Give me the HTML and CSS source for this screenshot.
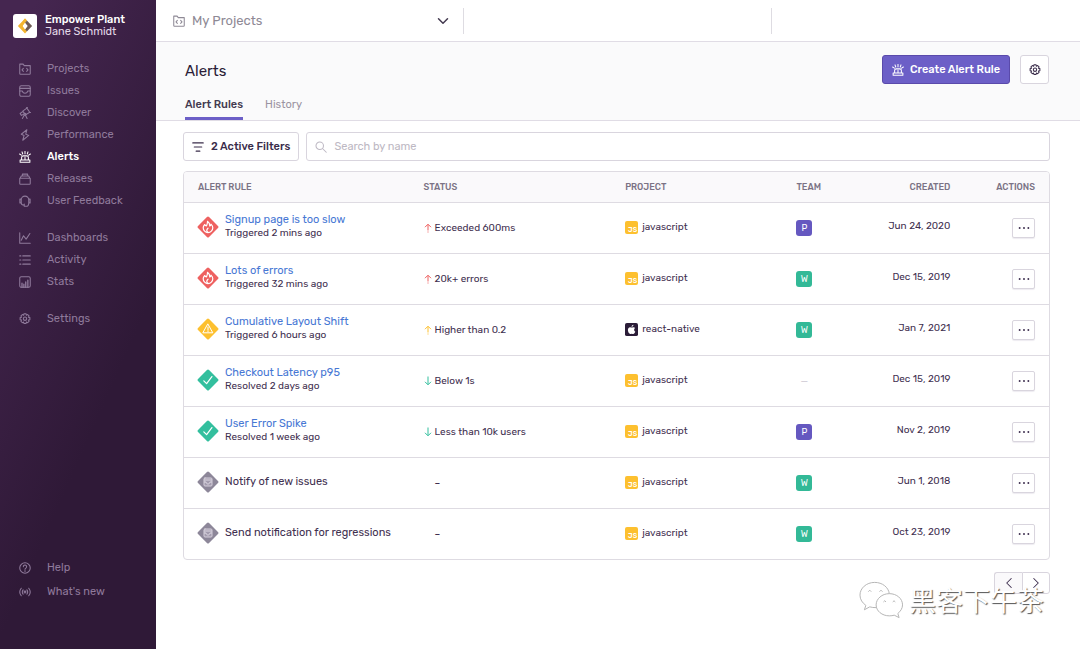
FILE: index.html
```html
<!DOCTYPE html>
<html lang="en">
<head>
<meta charset="utf-8">
<title>Alerts</title>
<link rel="stylesheet" href="styles.css">
</head>
<body>
<svg class="sprite" aria-hidden="true">
  <symbol id="folder" viewBox="0 0 16 16"><path d="M1 1.500h4.500L7 3.500h8v10.500a1 1 0 0 1-1 1H2a1 1 0 0 1-1-1zM5.800 7.200 4 9.200l1.800 2M10.200 7.200l1.800 2-1.800 2"/></symbol>
  <symbol id="issues" viewBox="0 0 16 16"><rect x="1" y="1" width="14" height="14" rx="2"/><path d="M1 4.500h14M1 8h3.500c.3 2 1.500 3 3.500 3s3.200-1 3.500-3H15"/></symbol>
  <symbol id="discover" viewBox="0 0 16 16"><path d="M5 5.500 10.500 1.500l3.800 5.500-5.500 3.500zM5.300 6 1.500 8.500l1.700 2.700L7.500 9M10 1l1.300-.5M14.300 7l1 .3"/><circle cx="8" cy="9.800" r="1.500"/><path d="M7 11l-2.500 4.300M8.800 11.200l2 4.100"/></symbol>
  <symbol id="bolt" viewBox="0 0 16 16"><path d="M10.500 1 3 7l3.800 1.600L5 15l8-6.500-4-1.600z"/></symbol>
  <symbol id="siren" viewBox="0 0 16 16"><path d="M3.500 12V8.500a2 2 0 0 1 2-2h5a2 2 0 0 1 2 2V12M1.500 15v-3h13v3zM8 8.500V12M8 .5v3.300M4 1.200l1 2.800M12 1.200 11 4M.8 4l2.400 1.500M15.200 4l-2.400 1.500"/></symbol>
  <symbol id="releases" viewBox="0 0 16 16"><path d="M1 7h14v7a1 1 0 0 1-1 1H2a1 1 0 0 1-1-1zM1.500 7l1.500-3h10l1.500 3M4.500 4V1.500h7V4"/></symbol>
  <symbol id="feedback" viewBox="0 0 16 16"><path d="M3 6.500a5 5 0 0 1 10 0M3 5.500H1.200v5H3zM13 5.500h1.800v5H13zM3 10.500c0 2 2 3 4 3M7 12v3h2.500c2.500 0 3.500-2 3.500-4.500"/></symbol>
  <symbol id="chart" viewBox="0 0 16 16"><path d="M1 1v14h14M3 11l3-6 3.500 4.500L14.500 2"/></symbol>
  <symbol id="list" viewBox="0 0 16 16"><path d="M5 2.500h10M5 8h10M5 13.500h10M1 2.500h1.500M1 8h1.500M1 13.500h1.500"/></symbol>
  <symbol id="stats" viewBox="0 0 16 16"><rect x="1" y="1" width="14" height="14" rx="2"/><path d="M4 15V9.500M6.500 15V11M9 15V8M11.800 15V5.500" stroke-width="1.800"/></symbol>
  <symbol id="gear" viewBox="0 0 16 16"><path d="M6.700 1h2.600l.5 1.900 1.700-.9 1.900 1.900-.9 1.700 2 .5v2.800l-2 .5.9 1.700-1.900 1.900-1.700-.9-.5 2H6.700l-.5-2-1.700.9-1.900-1.900.9-1.700-2-.5V6.100l2-.5-.9-1.700L4.500 2l1.700.9z"/><circle cx="8" cy="7.600" r="2.200"/></symbol>
  <symbol id="help" viewBox="0 0 16 16"><circle cx="8" cy="8" r="7"/><path d="M5.800 6.300a2.200 2.200 0 1 1 3.400 1.800c-.8.500-1.200.8-1.200 1.700M8 11.300v1.200"/></symbol>
  <symbol id="broadcast" viewBox="0 0 16 16"><circle cx="8" cy="8" r="1.200"/><path d="M5.500 5.200a4.500 4.500 0 0 0 0 5.600M10.500 5.200a4.500 4.500 0 0 1 0 5.600M3 3a8 8 0 0 0 0 10M13 3a8 8 0 0 1 0 10"/></symbol>
  <symbol id="search" viewBox="0 0 16 16"><circle cx="6.300" cy="6.300" r="5"/><path d="M10 10l5 5"/></symbol>
  <symbol id="filter" viewBox="0 0 16 16"><path d="M1 2.500h14M3 8h10M5.500 13.500h5"/></symbol>
  <symbol id="down" viewBox="0 0 16 16"><path d="M2 5l6 6 6-6"/></symbol>
  <symbol id="left" viewBox="0 0 16 16"><path d="M11 2 5 8l6 6"/></symbol>
  <symbol id="right" viewBox="0 0 16 16"><path d="M5 2l6 6-6 6"/></symbol>
  <symbol id="arrow-up" viewBox="0 0 8 10"><path d="M4 9.500v-1M4 7.500v-6M1 4.200l3-3 3 3"/></symbol>
  <symbol id="arrow-down" viewBox="0 0 8 10"><path d="M4 .5v8M1 5.800l3 3 3-3"/></symbol>
  <symbol id="dots" viewBox="0 0 16 16"><g fill="currentColor" stroke="none"><circle cx="2.200" cy="8" r="1.300"/><circle cx="8" cy="8" r="1.300"/><circle cx="13.800" cy="8" r="1.300"/></g></symbol>
  <symbol id="diamond" viewBox="0 0 22 22"><rect x="3.200" y="3.200" width="15.600" height="15.600" rx="1.500" transform="rotate(45 11 11)" fill="currentColor" stroke="none"/></symbol>
  <symbol id="fire" viewBox="0 0 22 22"><use href="#diamond"/><path stroke="#fff" stroke-width="1.200" d="M7.600 8.600c-1 1.100-1.400 2.100-1.400 3.200a4.800 4.800 0 0 0 9.600 0c0-1.500-.7-2.700-1.800-3.700-.1.900-.5 1.500-1.200 1.900 0-2-.6-3.500-2.300-4.700.2 2-.4 3.200-1 4.500-.9-.2-1.500-.6-1.900-1.200zM11 16.200c-1.600-.8-1.700-2.500 0-4"/></symbol>
  <symbol id="warning" viewBox="0 0 22 22"><use href="#diamond"/><path stroke="#fff" d="M11 6.200l4.800 8.600H6.200zM11 9v3M11 13v.5"/></symbol>
  <symbol id="check" viewBox="0 0 22 22"><use href="#diamond"/><path stroke="#fff" stroke-width="1.200" d="M6.800 11.800l2.800 2.800 5.300-7"/></symbol>
  <symbol id="issue" viewBox="0 0 22 22"><use href="#diamond"/><rect x="7" y="7" width="8" height="8" rx="1" stroke="#d6d0dc" fill="#a39cae"/><path stroke="#ded9e3" d="M7.500 9h7M7.500 11H9c.3 1.400 1 2 2 2s1.700-.6 2-2h1.500"/></symbol>
  <symbol id="apple" viewBox="0 0 14 14"><rect width="14" height="14" rx="2" fill="#2b1d38" stroke="none"/><path fill="#fff" stroke="none" d="M9.100 2c.1 1.100-.9 2.200-2 2.200C7 3 8 2.100 9.100 2zM7.200 4.900c.5 0 1-.4 1.800-.4.800 0 1.500.4 1.900 1-1.600 1-1.300 3.200.2 3.900-.5 1.300-1.300 2.400-2.200 2.400-.6 0-.9-.3-1.600-.3s-1 .3-1.600.3c-1.300 0-2.600-2.500-2.600-4.300s1.100-3 2.400-3c.8 0 1.300.4 1.700.4z"/></symbol>
</svg>

<div class="app">
  <aside class="sidebar">
    <div class="brand">
      <span class="brand-logo">
        <svg viewBox="0 0 24 24"><path d="M12 2 2.500 12l9.500 10 2.500-2.700L9 12l5.500-7.200z" fill="#f3b52f"/><path d="M12 2 14.500 4.800 12 8.200 9.500 5z" fill="#f3b52f"/><path d="M14.500 4.800 21.500 12l-7 7.300-2.500-2.900 3.400-4.400-3.400-4z" fill="#6f5c55"/><path d="M12 8 15.400 12 12 16.400 9 12z" fill="#fff"/></svg>
      </span>
      <div>
        <div class="brand-org">Empower Plant</div>
        <div class="brand-user">Jane Schmidt</div>
      </div>
    </div>
    <nav class="nav">
      <a href="#"><svg class="icon"><use href="#folder"/></svg>Projects</a>
      <a href="#"><svg class="icon"><use href="#issues"/></svg>Issues</a>
      <a href="#"><svg class="icon"><use href="#discover"/></svg>Discover</a>
      <a href="#"><svg class="icon"><use href="#bolt"/></svg>Performance</a>
      <a href="#" class="active" aria-current="page"><svg class="icon"><use href="#siren"/></svg>Alerts</a>
      <a href="#"><svg class="icon"><use href="#releases"/></svg>Releases</a>
      <a href="#"><svg class="icon"><use href="#feedback"/></svg>User Feedback</a>
    </nav>
    <nav class="nav">
      <a href="#"><svg class="icon"><use href="#chart"/></svg>Dashboards</a>
      <a href="#"><svg class="icon"><use href="#list"/></svg>Activity</a>
      <a href="#"><svg class="icon"><use href="#stats"/></svg>Stats</a>
    </nav>
    <nav class="nav">
      <a href="#"><svg class="icon"><use href="#gear"/></svg>Settings</a>
    </nav>
    <nav class="nav nav-bottom">
      <a href="#"><svg class="icon"><use href="#help"/></svg>Help</a>
      <a href="#"><svg class="icon"><use href="#broadcast"/></svg>What's new</a>
    </nav>
  </aside>

  <main class="main">
    <div class="topbar">
      <div class="topbar-cell">
        <svg class="icon"><use href="#folder"/></svg>
        <select class="project-select" aria-label="Project"><option>My Projects</option></select>
        <svg class="icon chevron"><use href="#down"/></svg>
      </div>
      <div class="topbar-cell"></div>
      <div class="topbar-cell"></div>
    </div>

    <header class="page-head">
      <div class="title-row">
        <h1>Alerts</h1>
        <button class="btn btn-primary" type="button"><svg class="icon"><use href="#siren"/></svg>Create Alert Rule</button>
        <button class="btn btn-icon" type="button" aria-label="Settings"><svg class="icon"><use href="#gear"/></svg></button>
      </div>
      <nav class="tabs">
        <a href="#" class="active">Alert Rules</a>
        <a href="#">History</a>
      </nav>
    </header>

    <section class="content">
      <div class="filters">
        <button class="btn btn-filter" type="button"><svg class="icon"><use href="#filter"/></svg>2 Active Filters</button>
        <label class="search"><svg class="icon"><use href="#search"/></svg><input type="text" placeholder="Search by name" aria-label="Search by name"></label>
      </div>

      <div class="panel">
        <table class="rules">
          <colgroup><col class="c-rule"><col class="c-status"><col class="c-project"><col class="c-team"><col class="c-created"><col class="c-actions"></colgroup>
          <thead>
            <tr><th>Alert Rule</th><th>Status</th><th>Project</th><th>Team</th><th class="end">Created</th><th class="actions">Actions</th></tr>
          </thead>
          <tbody>
            <tr>
              <td><div class="rule"><svg class="badge red"><use href="#fire"/></svg><div><a href="#">Signup page is too slow</a><small>Triggered 2 mins ago</small></div></div></td>
              <td><span class="status"><svg class="arrow red"><use href="#arrow-up"/></svg>Exceeded 600ms</span></td>
              <td><span class="project"><span class="js">JS</span>javascript</span></td>
              <td><span class="team purple">P</span></td>
              <td class="end">Jun 24, 2020</td>
              <td class="actions"><button class="more" type="button" aria-label="More"><svg class="icon"><use href="#dots"/></svg></button></td>
            </tr>
            <tr>
              <td><div class="rule"><svg class="badge red"><use href="#fire"/></svg><div><a href="#">Lots of errors</a><small>Triggered 32 mins ago</small></div></div></td>
              <td><span class="status"><svg class="arrow red"><use href="#arrow-up"/></svg>20k+ errors</span></td>
              <td><span class="project"><span class="js">JS</span>javascript</span></td>
              <td><span class="team green">W</span></td>
              <td class="end">Dec 15, 2019</td>
              <td class="actions"><button class="more" type="button" aria-label="More"><svg class="icon"><use href="#dots"/></svg></button></td>
            </tr>
            <tr>
              <td><div class="rule"><svg class="badge yellow"><use href="#warning"/></svg><div><a href="#">Cumulative Layout Shift</a><small>Triggered 6 hours ago</small></div></div></td>
              <td><span class="status"><svg class="arrow yellow"><use href="#arrow-up"/></svg>Higher than 0.2</span></td>
              <td><span class="project"><svg class="platform"><use href="#apple"/></svg>react-native</span></td>
              <td><span class="team green">W</span></td>
              <td class="end">Jan 7, 2021</td>
              <td class="actions"><button class="more" type="button" aria-label="More"><svg class="icon"><use href="#dots"/></svg></button></td>
            </tr>
            <tr>
              <td><div class="rule"><svg class="badge teal"><use href="#check"/></svg><div><a href="#">Checkout Latency p95</a><small>Resolved 2 days ago</small></div></div></td>
              <td><span class="status"><svg class="arrow teal"><use href="#arrow-down"/></svg>Below 1s</span></td>
              <td><span class="project"><span class="js">JS</span>javascript</span></td>
              <td><span class="no-team">—</span></td>
              <td class="end">Dec 15, 2019</td>
              <td class="actions"><button class="more" type="button" aria-label="More"><svg class="icon"><use href="#dots"/></svg></button></td>
            </tr>
            <tr>
              <td><div class="rule"><svg class="badge teal"><use href="#check"/></svg><div><a href="#">User Error Spike</a><small>Resolved 1 week ago</small></div></div></td>
              <td><span class="status"><svg class="arrow teal"><use href="#arrow-down"/></svg>Less than 10k users</span></td>
              <td><span class="project"><span class="js">JS</span>javascript</span></td>
              <td><span class="team purple">P</span></td>
              <td class="end">Nov 2, 2019</td>
              <td class="actions"><button class="more" type="button" aria-label="More"><svg class="icon"><use href="#dots"/></svg></button></td>
            </tr>
            <tr>
              <td><div class="rule"><svg class="badge gray"><use href="#issue"/></svg><span class="rule-name">Notify of new issues</span></div></td>
              <td><span class="status none">–</span></td>
              <td><span class="project"><span class="js">JS</span>javascript</span></td>
              <td><span class="team green">W</span></td>
              <td class="end">Jun 1, 2018</td>
              <td class="actions"><button class="more" type="button" aria-label="More"><svg class="icon"><use href="#dots"/></svg></button></td>
            </tr>
            <tr>
              <td><div class="rule"><svg class="badge gray"><use href="#issue"/></svg><span class="rule-name">Send notification for regressions</span></div></td>
              <td><span class="status none">–</span></td>
              <td><span class="project"><span class="js">JS</span>javascript</span></td>
              <td><span class="team green">W</span></td>
              <td class="end">Oct 23, 2019</td>
              <td class="actions"><button class="more" type="button" aria-label="More"><svg class="icon"><use href="#dots"/></svg></button></td>
            </tr>
          </tbody>
        </table>
      </div>

      <div class="pager">
        <button type="button" class="prev" aria-label="Previous"><svg class="icon"><use href="#left"/></svg></button>
        <button type="button" aria-label="Next"><svg class="icon"><use href="#right"/></svg></button>
      </div>
    </section>
  </main>
</div>

<div class="watermark" lang="zh-CN">
  <svg viewBox="0 0 46 38" aria-hidden="true">
    <path d="M31 12.500C30 6 24 1 16 1 7.500 1 1 7 1 14c0 4.500 2.500 8 6 10.500L5.500 29l5.500-3c2 .6 4 .8 6.500.8"/>
    <path d="M31 12.500c7.500 0 13.500 5 13.500 11.500 0 3.500-2 6.500-4.800 8.800l1.300 4.200-5-2.500c-1.500.5-3 .7-5 .7-7.500 0-13.500-5-13.500-11.200s6-11.500 13.500-11.500z"/>
    <path d="M9.500 10.500q1.500-3 3 0M21 10.500q1.500-3 3 0M25 21q1.300-2.500 2.600 0M34.500 21q1.300-2.500 2.600 0"/>
  </svg>
  <span>黑客下午茶</span>
</div>
</body>
</html>
```

FILE: styles.css
```css
* { box-sizing: border-box; }

body {
  margin: 0;
  background: #fff;
  color: #3f3050;
  font-family: Rubik, Roboto, "Noto Sans", sans-serif;
  font-size: 11px;
  line-height: 14px;
}

a { color: inherit; text-decoration: none; }
button, input, select { font: inherit; color: inherit; }
button { cursor: pointer; }

.sprite { position: absolute; width: 0; height: 0; }

.icon {
  display: block;
  flex: none;
  width: 12px;
  height: 12px;
  fill: none;
  stroke: currentColor;
  stroke-width: 1.4;
  stroke-linecap: round;
  stroke-linejoin: round;
}

.app { display: flex; min-height: 100vh; }

/* Sidebar */
.sidebar {
  display: flex;
  flex-direction: column;
  flex: none;
  width: 156px;
  padding: 14px 0 45px;
  background: linear-gradient(294deg, #2f1937 36%, #452650 92%);
  color: #8f7a9b;
}
.brand {
  display: flex;
  align-items: center;
  gap: 8px;
  padding-left: 13px;
  color: #e2d8e8;
  line-height: 12px;
}
.brand-logo {
  width: 24px;
  height: 24px;
  padding: 3px;
  border-radius: 3px;
  background: #fff;
}
.brand-logo svg { display: block; }
.brand-org { color: #fff; font-weight: 500; }

.nav { margin-bottom: 15px; }
.brand + .nav { margin-top: 20px; }
.nav a {
  display: flex;
  align-items: center;
  gap: 16px;
  height: 22px;
  padding-left: 19px;
}
.nav .active { color: #fff; font-weight: 500; }
.nav-bottom { margin: auto 0 0; }
.nav-bottom a { height: 24px; }

/* Top bar */
.main { flex: 1; min-width: 0; }
.topbar {
  display: grid;
  grid-template-columns: repeat(3, 1fr);
  align-items: center;
  height: 42px;
  border-bottom: 1px solid #e0dce5;
}
.topbar-cell {
  display: flex;
  align-items: center;
  gap: 7px;
  height: 26px;
  padding: 0 14px 0 17px;
  border-right: 1px solid #dedce2;
  color: #8e8995;
}
.topbar-cell:last-child { border: 0; }
.project-select {
  flex: 1;
  padding: 0;
  border: 0;
  background: none;
  font-size: 13px;
  appearance: none;
}
.chevron { color: #443a50; stroke-width: 2; }

/* Page header */
.page-head {
  padding: 13px 31px 0 29px;
  border-bottom: 1px solid #e0dce5;
  background: #fafafb;
}
.title-row { display: flex; align-items: center; gap: 10px; }
h1 {
  flex: 1;
  margin: 0;
  padding-top: 3px;
  color: #2b1d38;
  font-size: 15px;
  font-weight: 400;
  line-height: 20px;
}
.btn {
  display: flex;
  align-items: center;
  gap: 6px;
  height: 29px;
  padding: 0 8px;
  border: 1px solid #d9d5de;
  border-radius: 3px;
  background: #fff;
  color: #3a2c4a;
  font-size: 11px;
  font-weight: 500;
  white-space: nowrap;
}
.btn-primary {
  padding: 0 9px;
  border-color: #5a4aab;
  background: #6c5fc7;
  color: #fff;
}
.btn-icon { width: 29px; justify-content: center; padding: 0; }

.tabs { display: flex; gap: 22px; margin-top: 12px; }
.tabs a {
  height: 24px;
  padding-top: 2px;
  border-bottom: 3px solid transparent;
  color: #9a94a2;
}
.tabs .active {
  border-color: #6c5fc7;
  color: #443a50;
  font-weight: 500;
}

/* Content */
.content { padding: 11px 30px 20px 27px; }
.filters { display: flex; gap: 7px; }
.btn-filter { gap: 7px; }
.search {
  display: flex;
  align-items: center;
  flex: 1;
  gap: 7px;
  padding: 0 8px;
  border: 1px solid #d9d5de;
  border-radius: 3px;
  color: #bdb8c3;
}
.search input {
  flex: 1;
  min-width: 0;
  padding: 0;
  border: 0;
  outline: 0;
  background: none;
  color: #3a2c4a;
}
.search input::placeholder { color: #bdb8c3; }

.panel {
  margin-top: 10px;
  overflow: hidden;
  border: 1px solid #dedbe2;
  border-radius: 4px;
}
.rules {
  width: 100%;
  border-spacing: 0;
  table-layout: fixed;
}
.c-rule { width: 27.7%; }
.c-status { width: 23.3%; }
.c-project { width: 19.8%; }
.c-team { width: 8%; }
.c-created { width: 9.8%; }
.c-actions { width: 11.4%; }

.rules th {
  height: 30px;
  padding: 0;
  background: #faf9fb;
  color: #7b7385;
  font-size: 9px;
  font-weight: 500;
  text-align: left;
  text-transform: uppercase;
}
.rules td {
  height: 51px;
  padding: 0;
  border-top: 1px solid #dedbe2;
}
.rules th:first-child { padding-left: 14px; }
.rules td:first-child { padding-left: 13px; }
.rules .end { text-align: right; }
.rules td.end { padding-bottom: 4px; font-size: 10px; }
.rules .actions { padding-right: 14px; text-align: right; }

.rule { display: flex; align-items: center; gap: 6px; padding-bottom: 3px; }
.rule a { display: block; color: #4777d4; }
.rule small { display: block; font-size: 10px; line-height: 13px; }
.badge { flex: none; width: 22px; height: 22px; fill: none; stroke-linecap: round; stroke-linejoin: round; }
.arrow { width: 8px; height: 10px; fill: none; stroke: currentColor; }
.red { color: #ee6160; }
.yellow { color: #fdc02f; }
.teal { color: #33bf9e; }
.gray { color: #8d8799; }

.status { display: flex; align-items: center; gap: 3px; font-size: 10px; }
.status.none { padding-left: 11px; }
.project { display: flex; align-items: center; gap: 4px; padding-bottom: 2px; font-size: 10px; }
.platform { width: 13px; height: 13px; }
.js {
  width: 13px;
  height: 13px;
  padding: 4px 1px 0 0;
  border-radius: 2px;
  background: #fdc02f;
  color: #fff;
  font-size: 7px;
  font-weight: 500;
  line-height: 9px;
  text-align: right;
}
.team {
  display: block;
  width: 16px;
  height: 16px;
  border-radius: 3px;
  color: #fff;
  font-size: 9px;
  line-height: 16px;
  text-align: center;
}
.purple { background: #6558c0; }
.green { background: #33b997; }
.no-team { padding-left: 4px; color: #d5d1da; font-size: 10px; }

.more {
  display: inline-flex;
  align-items: center;
  justify-content: center;
  width: 23px;
  height: 20px;
  padding: 0;
  border: 1px solid #d9d5de;
  border-radius: 2px;
  background: #fff;
  box-shadow: 0 1px 1px #eeecf1;
  vertical-align: middle;
}

.pager { display: flex; justify-content: flex-end; margin-top: 12px; }
.pager button {
  display: flex;
  align-items: center;
  justify-content: center;
  width: 28px;
  height: 22px;
  padding: 0;
  border: 1px solid #d9d5de;
  border-radius: 0 3px 3px 0;
  background: #fff;
}
.pager .prev { border-right: 0; border-radius: 3px 0 0 3px; background: #faf9fb; }

/* Account mark laid over the page corner */
.watermark {
  position: absolute;
  right: 36px;
  bottom: 30px;
  display: flex;
  align-items: center;
  gap: 5px;
  color: #fff;
  font-family: "Noto Sans CJK SC", sans-serif;
  font-size: 27px;
  font-weight: 400;
  line-height: 38px;
  text-shadow: 1px 1px 1px #555;
  pointer-events: none;
}
.watermark svg {
  width: 45px;
  height: 38px;
  fill: #fff;
  stroke: #b4b4b4;
  stroke-width: 1;
}
```
